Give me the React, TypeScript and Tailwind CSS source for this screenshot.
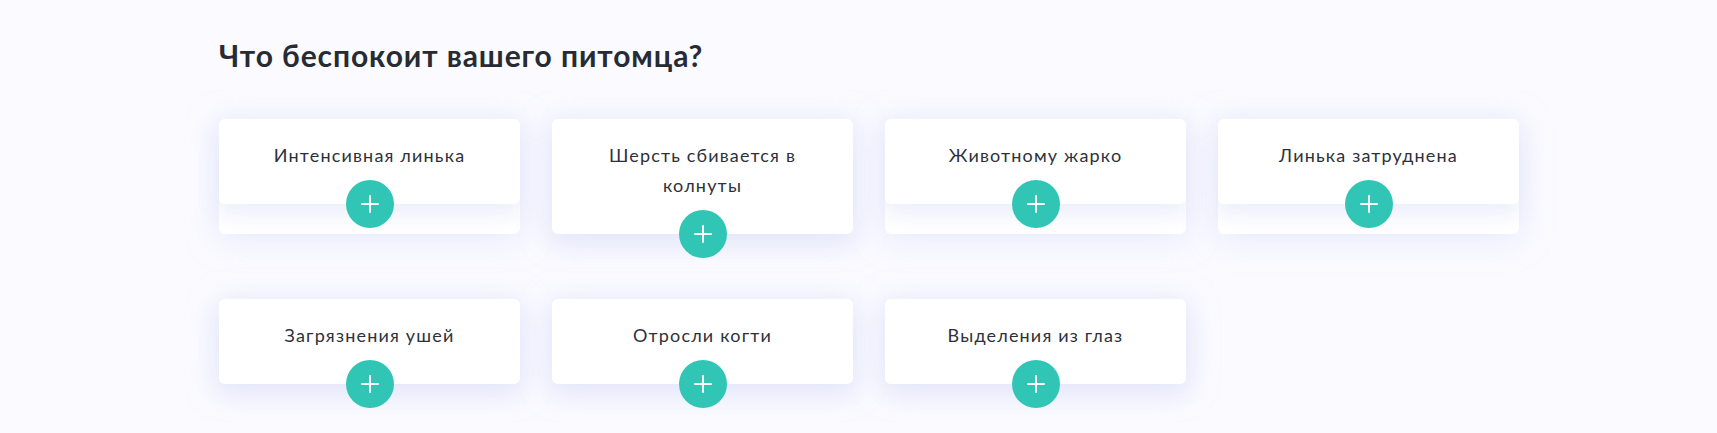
import React from 'react';

const problems = [
  'Интенсивная линька',
  'Шерсть сбивается в колнуты',
  'Животному жарко',
  'Линька затруднена',
  'Загрязнения ушей',
  'Отросли когти',
  'Выделения из глаз',
];

const PlusButton = () => (
  <button className="absolute left-1/2 bottom-0 -translate-x-1/2 translate-y-1/2 w-12 h-12 rounded-full bg-[#31c5b6] flex items-center justify-center z-10">
    <svg width="18" height="18" viewBox="0 0 18 18" fill="none">
      <path d="M9 1v16M1 9h16" stroke="white" strokeWidth="2" strokeLinecap="round" />
    </svg>
  </button>
);

const ProblemCard = ({ title }: { title: string }) => (
  <div className="bg-white rounded-md shadow-[0_4px_30px_rgba(214,218,248,0.55)]">
    <div className="relative bg-white rounded-md shadow-[0_10px_22px_rgba(228,231,250,0.75)] pt-[21px] pb-[34px] px-10 text-center">
      <p className="text-[18px] leading-[30px] tracking-[0.065em] text-[#2e313a]">{title}</p>
      <PlusButton />
    </div>
  </div>
);

export default function App() {
  return (
    <div className="min-h-[433px] bg-[#fafaff] pl-[219px] pt-[37px] font-['Lato','Noto_Sans',sans-serif]">
      <h2 className="text-[30px] leading-[36px] font-bold tracking-[0.03em] text-[#272b34] mb-[46px]">Что беспокоит вашего питомца?</h2>
      <div className="w-[1300px] grid grid-cols-4 gap-x-8 gap-y-[65px] pb-12">
        {problems.map((p) => (
          <ProblemCard key={p} title={p} />
        ))}
      </div>
    </div>
  );
}
